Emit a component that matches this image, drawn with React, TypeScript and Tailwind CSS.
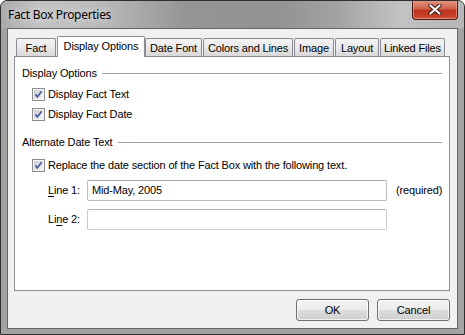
import React from "react";

const UI_FONT = "font-['Liberation_Sans',Arial,sans-serif] text-[11px] tracking-[-0.15px] text-black";

function CheckBox() {
  return (
    <svg width="13" height="13" viewBox="0 0 13 13" className="shrink-0">
      <defs>
        <linearGradient id="cbFill" x1="0" y1="0" x2="1" y2="1">
          <stop offset="0" stopColor="#c9cdd3" />
          <stop offset="1" stopColor="#f7f7f7" />
        </linearGradient>
      </defs>
      <rect x="0.5" y="0.5" width="12" height="12" fill="#f4f4f4" stroke="#8e8f8f" />
      <rect x="2" y="2" width="9" height="9" fill="url(#cbFill)" />
      <path d="M3.4 6.4 L5.4 8.9 L9.6 3.2" fill="none" stroke="#4a5c9e" strokeWidth="1.7" />
    </svg>
  );
}

function GroupHeader({ label }: { label: string }) {
  return (
    <div className="flex items-center h-[16px] pl-[7px] pr-[7px]">
      <span className="whitespace-nowrap">{label}</span>
      <div className="h-px flex-1 ml-[5px] bg-[#a0a0a0]" />
    </div>
  );
}

function CheckRow({ label }: { label: string }) {
  return (
    <div className="flex items-center h-[20px] pl-[17px] gap-[3px]">
      <CheckBox />
      <span className="whitespace-nowrap">{label}</span>
    </div>
  );
}

const TAB_BASE =
  "h-[18px] flex items-center justify-center border border-b-0 border-[#898c95] rounded-t-[2px] bg-gradient-to-b from-[#f4f4f4] via-[#e9e9e9] to-[#d8d8d8] pt-[1px] whitespace-nowrap";

const BUTTON =
  "w-[73px] h-[22px] rounded-[3px] border border-[#707070] bg-[linear-gradient(180deg,#f3f3f3_0%,#ebebeb_48%,#dddddd_52%,#cfcfcf_100%)] shadow-[inset_0_0_0_1px_rgba(255,255,255,0.7)]";

export default function App() {
  return (
    <div className="w-[465px] h-[335px] flex flex-col rounded-t-[7px] border border-[#2e2e2e] bg-[#a3a3a3] overflow-hidden">
      {/* ── Title bar ─────────────────────────────── */}
      <div className="h-[27px] flex items-start shrink-0 bg-[linear-gradient(90deg,#a9a9a9_0%,#c3c3c3_8%,#b9b9b9_22%,#959595_40%,#939393_60%,#a2a2a2_72%,#c2c2c2_86%,#b6b6b6_100%)]">
        <span className="pl-[7px] pt-[6px] font-['Noto_Sans',sans-serif] text-[12px] tracking-[-0.3px] leading-[16px] text-black [text-shadow:0_0_8px_rgba(255,255,255,0.95)]">
          Fact Box Properties
        </span>
        <div className="ml-auto mr-[6px] -mt-px w-[46px] h-[20px] flex items-center justify-center rounded-b-[4px] border border-t-0 border-[#4d1a12] bg-[linear-gradient(180deg,#e49a86_0%,#d0634c_45%,#bd3420_55%,#c63f27_85%,#d9593d_100%)] shadow-[inset_0_0_0_1px_rgba(255,210,200,0.4)]">
          <svg width="14" height="11" viewBox="0 0 14 11">
            <path d="M2.5 1.5 L11.5 9.5 M11.5 1.5 L2.5 9.5" stroke="#3b1a14" strokeWidth="4.2" strokeLinecap="round" />
            <path d="M2.5 1.5 L11.5 9.5 M11.5 1.5 L2.5 9.5" stroke="#f4f4f4" strokeWidth="2.3" strokeLinecap="round" />
          </svg>
        </div>
      </div>

      {/* ── Client area ───────────────────────────── */}
      <div className={`mx-[6px] h-[301px] border border-[#666666] bg-[#f0f0f0] pt-[7px] pl-[6px] pr-[7px] flex flex-col ${UI_FONT}`}>
        {/* Tabs */}
        <div className="h-[20px] flex items-end">
          <div className={`${TAB_BASE} ml-[2px] w-[40px]`}>Fact</div>
          <div className="relative z-10 -mb-px ml-px w-[88px] h-[21px] flex items-center justify-center border border-b-0 border-[#898c95] rounded-t-[2px] bg-white pb-[1px] whitespace-nowrap">
            Display Options
          </div>
          <div className={`${TAB_BASE} w-[57px]`}>Date Font</div>
          <div className={`${TAB_BASE} ml-px w-[90px]`}>Colors and Lines</div>
          <div className={`${TAB_BASE} ml-px w-[40px]`}>Image</div>
          <div className={`${TAB_BASE} ml-px w-[44px]`}>Layout</div>
          <div className={`${TAB_BASE} ml-px w-[65px]`}>Linked Files</div>
        </div>

        {/* Tab panel */}
        <div className="h-[235px] border border-[#898c95] bg-white pt-[8px] flex flex-col">
          <GroupHeader label="Display Options" />
          <div className="mt-[3px]">
            <CheckRow label="Display Fact Text" />
            <CheckRow label="Display Fact Date" />
          </div>
          <div className="mt-[10px]">
            <GroupHeader label="Alternate Date Text" />
          </div>
          <div className="mt-[5px]">
            <CheckRow label="Replace the date section of the Fact Box with the following text." />
          </div>
          <div className="mt-[5px] flex items-center pl-[33px]">
            <span className="w-[39px]">
              <span className="underline underline-offset-2">L</span>ine 1:
            </span>
            <div className="w-[300px] h-[21px] flex items-center px-[4px] border border-[#b7bcc4] border-t-[#a4a8b0] rounded-[2px] bg-white">
              Mid-May, 2005
            </div>
            <span className="ml-[9px]">(required)</span>
          </div>
          <div className="mt-[8px] flex items-center pl-[33px]">
            <span className="w-[39px]">
              Li<span className="underline underline-offset-2">n</span>e 2:
            </span>
            <div className="w-[300px] h-[21px] border border-[#c6cad1] border-t-[#b0b4bb] rounded-[2px] bg-white" />
          </div>
        </div>

        {/* Buttons */}
        <div className="mt-[8px] flex justify-end gap-[8px]">
          <button className={BUTTON}>OK</button>
          <button className={BUTTON}>Cancel</button>
        </div>
      </div>
    </div>
  );
}
